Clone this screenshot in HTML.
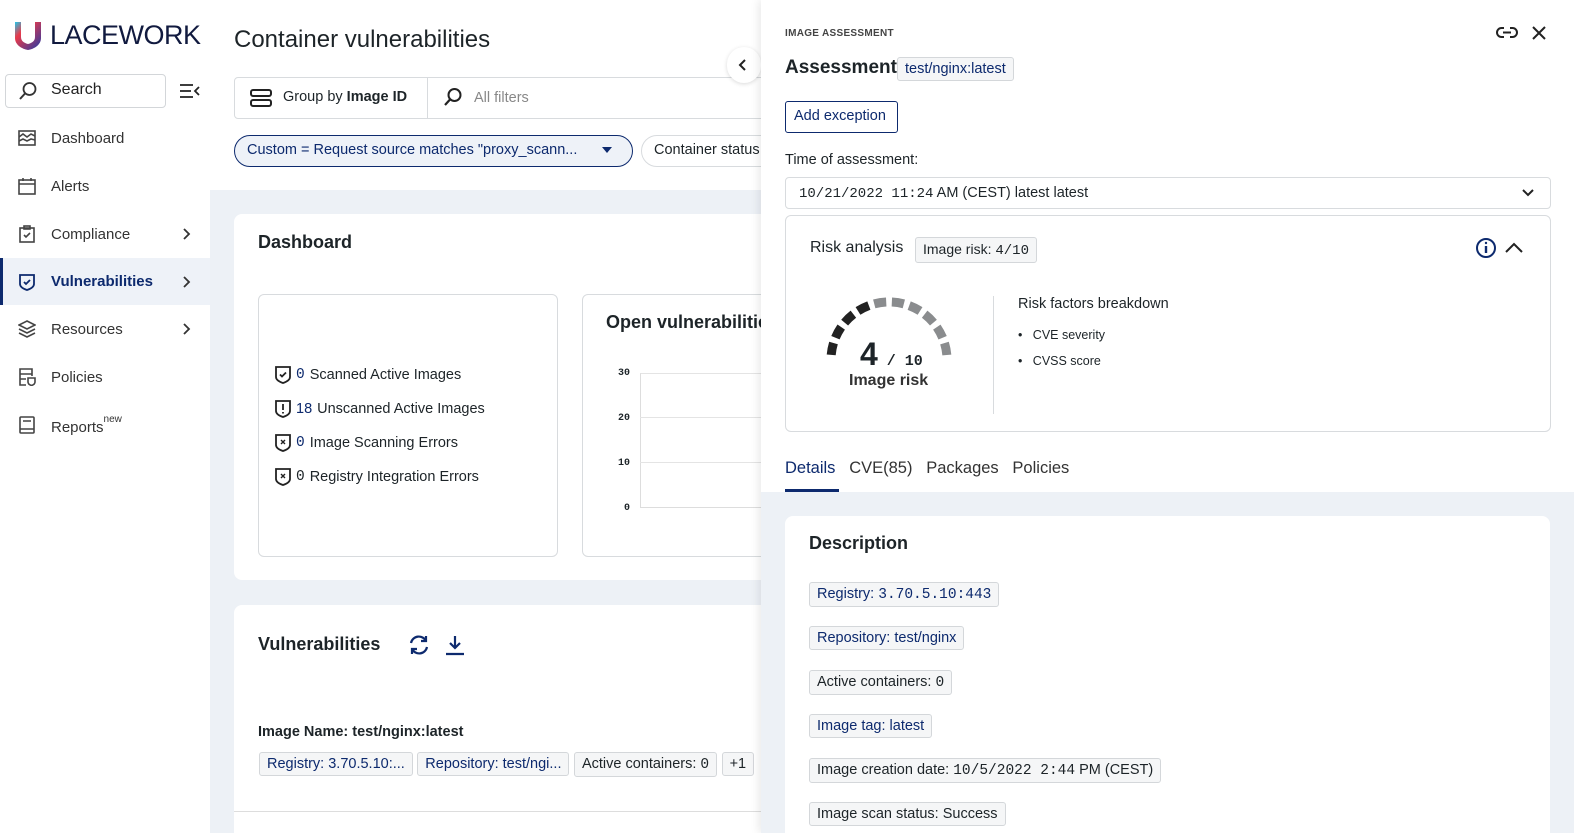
<!DOCTYPE html>
<html><head><meta charset="utf-8"><style>
*{box-sizing:border-box;margin:0;padding:0}
html,body{width:1574px;height:833px;overflow:hidden}
body{font-family:"Liberation Sans",sans-serif;color:#1d2428;background:#edf1f6;position:relative}
.abs{position:absolute}
.mono{font-family:"Liberation Mono",monospace}
.side{left:0;top:0;width:210px;height:833px;background:#fff}
.nav{position:absolute;left:0;width:210px;height:46px;display:flex;align-items:center;font-size:15px;color:#333}
.nav svg{position:absolute;left:18px}
.nav span{position:absolute;left:51px}
.nav svg.chev{left:182px}
.tag{display:inline-block;border:1px solid #d4d7da;background:#f5f6f7;border-radius:3px;padding:2px 7px;font-size:14.5px;line-height:18px}
.blue{color:#0d2a6e}
.card{background:#fff;border-radius:8px}
.stat{display:flex;align-items:center;gap:5px;height:34px}
</style></head><body>
<div class="abs side">
  <svg class="abs" style="left:14px;top:21px" width="28" height="30" viewBox="0 0 28 30"><defs><linearGradient id="g" x1="0" y1="0" x2="1" y2="1"><stop offset="0" stop-color="#23c6e8"/><stop offset=".3" stop-color="#e93a4a"/><stop offset="1" stop-color="#1f3aa8"/></linearGradient></defs><path d="M1 1H27V17C27 24 20 28 14 29C8 28 1 24 1 17Z" fill="url(#g)"/><path d="M7 1H21V16C21 20 18 22 14 23C10 22 7 20 7 16Z" fill="#fff"/></svg>
  <div class="abs" style="left:50px;top:20px;font-size:27px;color:#111a3f;letter-spacing:-0.5px">LACEWORK</div>
  <div class="abs" style="left:5px;top:74px;width:161px;height:34px;border:1px solid #d3d6d9;border-radius:4px"></div>
  <svg class="abs" style="left:18px;top:81px" width="20" height="20" viewBox="0 0 20 20"><circle cx="11.5" cy="8" r="6" fill="none" stroke="#333" stroke-width="1.8"/><path d="M7 12.5L2 18" stroke="#333" stroke-width="2"/></svg>
  <div class="abs" style="left:51px;top:81px;font-size:16px;color:#222">Search</div>
  <svg class="abs" style="left:180px;top:84px" width="20" height="14" viewBox="0 0 20 14"><path d="M0 1H13M0 7H11M0 13H13M19 3L15 7L19 11" fill="none" stroke="#222" stroke-width="1.8"/></svg>
  <div class="nav" style="top:115px"><svg width="18" height="18" viewBox="0 0 18 18" fill="none" stroke="#444" stroke-width="1.6"><rect x="1" y="2" width="16" height="14"/><path d="M1 8L5 5L9 8L13 5L17 7M1 12L5 10L9 12L13 10L17 11"/></svg><span>Dashboard</span></div>
  <div class="nav" style="top:163px"><svg width="18" height="18" viewBox="0 0 18 18" fill="none" stroke="#444" stroke-width="1.6"><rect x="1" y="3" width="16" height="14"/><path d="M1 7H17M5 1V4M13 1V4"/></svg><span>Alerts</span></div>
  <div class="nav" style="top:211px"><svg width="18" height="18" viewBox="0 0 18 18" fill="none" stroke="#444" stroke-width="1.6"><rect x="2" y="3" width="14" height="14"/><rect x="6" y="1" width="6" height="3"/><path d="M6 10L8 12L12 8"/></svg><span>Compliance</span><svg class="chev" width="10" height="14" viewBox="0 0 10 14"><path d="M2 2L7 7L2 12" fill="none" stroke="#333" stroke-width="1.8"/></svg></div>
  <div class="nav" style="top:258px;background:#eef2f8;border-left:3px solid #0d2a6e;height:47px"><svg width="18" height="18" viewBox="0 0 18 18" fill="none" stroke="#0d2a6e" stroke-width="1.8" style="left:15px"><path d="M2 2H16V11C16 14 12 16 9 17C6 16 2 14 2 11Z"/><path d="M6 9L8 11L12 7"/></svg><span style="left:48px;color:#0d2a6e;font-weight:bold">Vulnerabilities</span><svg class="chev" style="left:179px" width="10" height="14" viewBox="0 0 10 14"><path d="M2 2L7 7L2 12" fill="none" stroke="#333" stroke-width="1.8"/></svg></div>
  <div class="nav" style="top:306px"><svg width="18" height="18" viewBox="0 0 18 18" fill="none" stroke="#444" stroke-width="1.6"><path d="M9 1L17 5L9 9L1 5Z M1 9L9 13L17 9M1 13L9 17L17 13"/></svg><span>Resources</span><svg class="chev" width="10" height="14" viewBox="0 0 10 14"><path d="M2 2L7 7L2 12" fill="none" stroke="#333" stroke-width="1.8"/></svg></div>
  <div class="nav" style="top:354px"><svg width="18" height="18" viewBox="0 0 18 18" fill="none" stroke="#444" stroke-width="1.6"><path d="M8 17H2V1H14V8M2 6H14M2 11H8"/><path d="M10 10H17V14C17 16 15 17 13.5 17.5C12 17 10 16 10 14Z"/></svg><span>Policies</span></div>
  <div class="nav" style="top:402px"><svg width="18" height="18" viewBox="0 0 18 18" fill="none" stroke="#444" stroke-width="1.6"><rect x="2" y="1" width="14" height="16" rx="1"/><path d="M5 5H13M2 13H16"/></svg><span>Reports<sup style="font-size:10px;vertical-align:10px">new</sup></span></div>
</div>
<div class="abs" style="left:210px;top:0;width:551px;height:190px;background:#fff"></div>
<div class="abs" style="left:234px;top:26px;font-size:24px;color:#1d2428">Container vulnerabilities</div>
<div class="abs" style="left:234px;top:77px;width:540px;height:42px;border:1px solid #d8dbde;border-radius:4px"></div>
<div class="abs" style="left:427px;top:78px;width:1px;height:40px;background:#d8dbde"></div>
<svg class="abs" style="left:250px;top:89px" width="22" height="18" viewBox="0 0 22 18" fill="none" stroke="#222" stroke-width="2"><rect x="1" y="1" width="20" height="6" rx="2"/><rect x="1" y="11" width="20" height="6" rx="2"/></svg>
<div class="abs" style="left:283px;top:89px;font-size:14.5px">Group by <b>Image ID</b></div>
<svg class="abs" style="left:443px;top:87px" width="20" height="20" viewBox="0 0 20 20"><circle cx="11.5" cy="8" r="6" fill="none" stroke="#222" stroke-width="2"/><path d="M7 12.5L2 18" stroke="#222" stroke-width="2.2"/></svg>
<div class="abs" style="left:474px;top:90px;font-size:14.5px;color:#888">All filters</div>
<div class="abs" style="left:234px;top:135px;width:399px;height:32px;border:1.5px solid #0d2a6e;border-radius:16px;background:#eef2f8"></div>
<div class="abs blue" style="left:247px;top:142px;font-size:14.5px">Custom = Request source matches "proxy_scann...</div>
<svg class="abs" style="left:602px;top:147px" width="10" height="6"><path d="M0 0H10L5 6Z" fill="#0d2a6e"/></svg>
<div class="abs" style="left:641px;top:135px;width:140px;height:32px;border:1px solid #d8dbde;border-radius:16px"></div>
<div class="abs" style="left:654px;top:142px;font-size:14.5px">Container status</div>
<div class="abs card" style="left:234px;top:214px;width:560px;height:366px"></div>
<div class="abs" style="left:258px;top:232px;font-size:18px;font-weight:bold">Dashboard</div>
<div class="abs" style="left:258px;top:294px;width:300px;height:263px;border:1px solid #d8dbde;border-radius:6px"></div>
<div class="abs" style="left:582px;top:294px;width:220px;height:263px;border:1px solid #d8dbde;border-radius:6px"></div>
<div class="abs" style="left:275px;top:358px;font-size:14.5px">
<div class="stat"><svg width="16" height="18" viewBox="0 0 16 18" fill="none" stroke="#222" stroke-width="1.8"><path d="M1 1H15V11C15 14 11 16 8 17C5 16 1 14 1 11Z"/><path d="M5 8.5L7 10.5L11 6.5"/></svg><span class="mono blue">0</span> Scanned Active Images</div>
<div class="stat"><svg width="16" height="18" viewBox="0 0 16 18" fill="none" stroke="#222" stroke-width="1.8"><path d="M1 1H15V11C15 14 11 16 8 17C5 16 1 14 1 11Z"/><path d="M8 4V10M8 12V13.5"/></svg><span class="blue">18</span> Unscanned Active Images</div>
<div class="stat"><svg width="16" height="18" viewBox="0 0 16 18" fill="none" stroke="#222" stroke-width="1.8"><path d="M1 1H15V11C15 14 11 16 8 17C5 16 1 14 1 11Z"/><path d="M6 6L10 10M10 6L6 10" stroke-width="1.4"/></svg><span class="mono blue">0</span> Image Scanning Errors</div>
<div class="stat"><svg width="16" height="18" viewBox="0 0 16 18" fill="none" stroke="#222" stroke-width="1.8"><path d="M1 1H15V11C15 14 11 16 8 17C5 16 1 14 1 11Z"/><path d="M6 6L10 10M10 6L6 10" stroke-width="1.4"/></svg><span class="mono">0</span> Registry Integration Errors</div>
</div>
<div class="abs" style="left:606px;top:312px;font-size:18px;font-weight:bold">Open vulnerabilities</div>
<div class="abs mono" style="left:612px;top:351px;font-size:10px;font-weight:bold;line-height:45px;text-align:right;width:18px">30<br>20<br>10<br>0</div>
<div class="abs" style="left:640px;top:373px;width:140px;height:135px;border-left:1px solid #ddd;border-top:1px solid #e4e4e4"></div>
<div class="abs" style="left:640px;top:417px;width:140px;height:1px;background:#e4e4e4"></div>
<div class="abs" style="left:640px;top:462px;width:140px;height:1px;background:#e4e4e4"></div>
<div class="abs" style="left:640px;top:507px;width:140px;height:1px;background:#ddd"></div>
<div class="abs card" style="left:234px;top:605px;width:560px;height:228px;border-radius:8px 8px 0 0"></div>
<div class="abs" style="left:258px;top:634px;font-size:18px;font-weight:bold">Vulnerabilities</div>
<svg class="abs" style="left:408px;top:634px" width="22" height="22" viewBox="0 0 22 22" fill="none" stroke="#0d2a6e" stroke-width="2.2"><path d="M3 9A8 8 0 0 1 18 7M19 13A8 8 0 0 1 4 15"/><path d="M18 2V7H13M4 20V15H9"/></svg>
<svg class="abs" style="left:444px;top:634px" width="22" height="22" viewBox="0 0 22 22" fill="none" stroke="#0d2a6e" stroke-width="2.2"><path d="M11 2V14M6 9L11 14L16 9M2 20H20"/></svg>
<div class="abs" style="left:258px;top:724px;font-size:14.5px;font-weight:bold">Image Name: test/nginx:latest</div>
<div class="abs" style="left:259px;top:752px;white-space:nowrap"><span class="tag blue">Registry: 3.70.5.10:...</span> <span class="tag blue">Repository: test/ngi...</span> <span class="tag">Active containers: <span class="mono">0</span></span> <span class="tag">+1</span></div>
<div class="abs" style="left:234px;top:811px;width:560px;height:1px;background:#ddd"></div>
<div class="abs" style="left:727px;top:47px;width:34px;height:36px;border-radius:18px;background:#fff;box-shadow:0 1px 4px rgba(0,0,0,.15)"></div>
<svg class="abs" style="left:737px;top:58px" width="12" height="14"><path d="M8 2L3 7L8 12" fill="none" stroke="#222" stroke-width="2"/></svg>
<div class="abs" style="left:761px;top:0;width:813px;height:833px;background:#fff;box-shadow:-3px 0 8px rgba(0,0,0,.08)"></div>
<div class="abs" style="left:761px;top:492px;width:813px;height:341px;background:#edf1f6"></div>
<div class="abs" style="left:785px;top:28px;font-size:10px;font-weight:bold;color:#444;letter-spacing:.3px">IMAGE ASSESSMENT</div>
<svg class="abs" style="left:1496px;top:26px" width="22" height="14" viewBox="0 0 22 14" fill="none" stroke="#222" stroke-width="2"><path d="M8 2H5.5A4.5 4.5 0 0 0 5.5 11H8M14 2H16.5A4.5 4.5 0 0 1 16.5 11H14M7 6.5H15"/></svg>
<svg class="abs" style="left:1531px;top:25px" width="16" height="16" fill="none" stroke="#222" stroke-width="2"><path d="M2 2L14 14M14 2L2 14"/></svg>
<div class="abs" style="left:785px;top:57px;font-size:19px;font-weight:bold">Assessment</div>
<div class="abs tag blue" style="left:897px;top:57px;height:24px;font-size:14.5px">test/nginx:latest</div>
<div class="abs blue" style="left:785px;top:101px;width:113px;height:32px;border:1.5px solid #0d2a6e;border-radius:3px;font-size:14.5px;padding:6px 0 0 8px">Add exception</div>
<div class="abs" style="left:785px;top:152px;font-size:14.5px">Time of assessment:</div>
<div class="abs" style="left:785px;top:177px;width:766px;height:32px;border:1px solid #d8dbde;border-radius:4px"></div>
<div class="abs" style="left:799px;top:185px;font-size:14.5px"><span class="mono" style="font-size:14px">10/21/2022 11:24</span> AM (CEST) latest latest</div>
<svg class="abs" style="left:1521px;top:188px" width="14" height="10" fill="none" stroke="#222" stroke-width="2"><path d="M2 2L7 7L12 2"/></svg>
<div class="abs" style="left:785px;top:215px;width:766px;height:217px;border:1px solid #d8dbde;border-radius:6px"></div>
<div class="abs" style="left:810px;top:239px;font-size:16px">Risk analysis</div>
<div class="abs tag" style="left:915px;top:237px;font-size:14px">Image risk: <span class="mono">4/10</span></div>
<svg class="abs" style="left:1475px;top:237px" width="22" height="22" fill="none" stroke="#0d2a6e" stroke-width="2"><circle cx="11" cy="11" r="9"/><path d="M11 9V16" stroke-width="2.4"/><circle cx="11" cy="6" r="1.2" fill="#0d2a6e" stroke="none"/></svg>
<svg class="abs" style="left:1504px;top:240px" width="20" height="14" fill="none" stroke="#222" stroke-width="2"><path d="M2 12L10 4L18 12"/></svg>
<svg class="abs" style="left:0;top:0" width="1000" height="420"><g fill="none" stroke-width="9">
<path id="s" d="M831.2 354.9 A58 58 0 0 1 833.5 343.0" stroke="#222"/>
<use href="#s" transform="rotate(17.56 889 360)"/>
<use href="#s" transform="rotate(35.11 889 360)"/>
<use href="#s" transform="rotate(52.67 889 360)"/>
<path d="M831.2 354.9 A58 58 0 0 1 833.5 343.0" stroke="#8a8c8e" transform="rotate(70.22 889 360)"/>
<path d="M831.2 354.9 A58 58 0 0 1 833.5 343.0" stroke="#8a8c8e" transform="rotate(87.78 889 360)"/>
<path d="M831.2 354.9 A58 58 0 0 1 833.5 343.0" stroke="#8a8c8e" transform="rotate(105.33 889 360)"/>
<path d="M831.2 354.9 A58 58 0 0 1 833.5 343.0" stroke="#8a8c8e" transform="rotate(122.89 889 360)"/>
<path d="M831.2 354.9 A58 58 0 0 1 833.5 343.0" stroke="#8a8c8e" transform="rotate(140.44 889 360)"/>
<path d="M831.2 354.9 A58 58 0 0 1 833.5 343.0" stroke="#8a8c8e" transform="rotate(158 889 360)"/>
</g></svg>
<div class="abs" style="left:860px;top:336px;font-size:32px;font-weight:bold">4<span class="mono" style="font-size:15px"> / 10</span></div>
<div class="abs" style="left:849px;top:372px;font-size:16px;font-weight:bold;color:#333">Image risk</div>
<div class="abs" style="left:993px;top:296px;width:1px;height:118px;background:#d8dbde"></div>
<div class="abs" style="left:1018px;top:296px;font-size:14.5px">Risk factors breakdown</div>
<div class="abs" style="left:1018px;top:322px;font-size:12.5px;line-height:26px"><div>•&nbsp;&nbsp;&nbsp;CVE severity</div><div>•&nbsp;&nbsp;&nbsp;CVSS score</div></div>
<div class="abs" style="left:785px;top:459px;font-size:16.5px;color:#333;word-spacing:0"><span class="blue">Details</span>&nbsp;&nbsp; CVE(85)&nbsp;&nbsp; Packages&nbsp;&nbsp; Policies</div>
<div class="abs" style="left:785px;top:489px;width:54px;height:3px;background:#0d2a6e"></div>
<div class="abs card" style="left:785px;top:516px;width:765px;height:317px;border-radius:8px 8px 0 0"></div>
<div class="abs" style="left:809px;top:533px;font-size:18px;font-weight:bold">Description</div>
<div class="abs" style="left:809px;top:572px;line-height:44px">
<div><span class="tag blue">Registry: <span class="mono">3.70.5.10:443</span></span></div>
<div><span class="tag blue">Repository: test/nginx</span></div>
<div><span class="tag">Active containers: <span class="mono">0</span></span></div>
<div><span class="tag blue">Image tag: latest</span></div>
<div><span class="tag">Image creation date: <span class="mono">10/5/2022 2:44</span> PM (CEST)</span></div>
<div><span class="tag">Image scan status: Success</span></div>
</div>
</body></html>
